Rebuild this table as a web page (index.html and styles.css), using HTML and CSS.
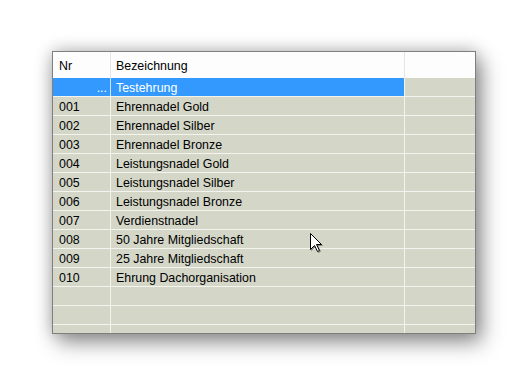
FILE: index.html
```html
<!DOCTYPE html>
<html lang="de">
<head>
<meta charset="utf-8">
<link rel="stylesheet" href="styles.css">
</head>
<body>
<div class="stage">
  <div class="grid">
    <div class="row head">
      <div class="c nr">Nr</div>
      <div class="c bez">Bezeichnung</div>
      <div class="c rest"></div>
    </div>
    <div class="row sel">
      <div class="c nr dots">...</div>
      <div class="c bez">Testehrung</div>
      <div class="c rest"></div>
    </div>
    <div class="row"><div class="c nr">001</div><div class="c bez">Ehrennadel Gold</div><div class="c rest"></div></div>
    <div class="row"><div class="c nr">002</div><div class="c bez">Ehrennadel Silber</div><div class="c rest"></div></div>
    <div class="row"><div class="c nr">003</div><div class="c bez">Ehrennadel Bronze</div><div class="c rest"></div></div>
    <div class="row"><div class="c nr">004</div><div class="c bez">Leistungsnadel Gold</div><div class="c rest"></div></div>
    <div class="row"><div class="c nr">005</div><div class="c bez">Leistungsnadel Silber</div><div class="c rest"></div></div>
    <div class="row"><div class="c nr">006</div><div class="c bez">Leistungsnadel Bronze</div><div class="c rest"></div></div>
    <div class="row"><div class="c nr">007</div><div class="c bez">Verdienstnadel</div><div class="c rest"></div></div>
    <div class="row"><div class="c nr">008</div><div class="c bez">50 Jahre Mitgliedschaft</div><div class="c rest"></div></div>
    <div class="row"><div class="c nr">009</div><div class="c bez">25 Jahre Mitgliedschaft</div><div class="c rest"></div></div>
    <div class="row"><div class="c nr">010</div><div class="c bez">Ehrung Dachorganisation</div><div class="c rest"></div></div>
    <div class="row"><div class="c nr"></div><div class="c bez"></div><div class="c rest"></div></div>
    <div class="row"><div class="c nr"></div><div class="c bez"></div><div class="c rest"></div></div>
    <div class="row"><div class="c nr"></div><div class="c bez"></div><div class="c rest"></div></div>
  </div>
  <svg class="cursor" width="14" height="21" viewBox="0 0 14 21">
    <path d="M0.5 0.5 L0.5 16.5 L4.5 12.5 L7.5 18.5 L9.5 17.5 L6.5 11.5 L11.5 11.5 Z" fill="#fff" stroke="#000" stroke-width="1" stroke-linejoin="miter"/>
  </svg>
</div>
</body>
</html>
```
FILE: styles.css
```css
html, body {
  margin: 0;
  padding: 0;
  background: #fff;
}
.stage {
  position: relative;
  width: 529px;
  height: 387px;
  padding: 51px 0 0 52px;
  box-sizing: border-box;
  font-family: "Liberation Sans", Arial, sans-serif;
  font-size: 12.4px;
  color: #000;
}
.grid {
  width: 424px;
  height: 283px;
  box-sizing: border-box;
  border: 1px solid #7f7f7f;
  background: #d4d7c8;
  overflow: hidden;
  display: flex;
  flex-direction: column;
  box-shadow: 0 0 16px rgba(0,0,0,0.25), 6px 9px 20px rgba(0,0,0,0.38);
}
.row {
  display: flex;
  flex: none;
  height: 19px;
  box-sizing: border-box;
  border-bottom: 1px solid #f4f4ee;
}
.c {
  box-sizing: border-box;
  padding-left: 6px;
  padding-top: 1px;
  line-height: 18px;
  white-space: nowrap;
  overflow: hidden;
}
.nr {
  width: 58px;
  border-right: 1px solid #f4f4ee;
}
.bez {
  width: 294px;
  padding-left: 5px;
  border-right: 1px solid #f4f4ee;
}
.rest {
  flex: 1;
}
.head {
  height: 26px;
  background: #fdfdfd;
  border-bottom: none;
}
.head .c {
  line-height: 26px;
}
.head .nr, .head .bez {
  border-right-color: #e6e6ea;
}
.sel .nr, .sel .bez {
  background: #3399ff;
  color: #fff;
}
.sel .nr {
  border-right-color: #cfe3f7;
}
.dots {
  text-align: right;
  padding-right: 3px;
}
.cursor {
  position: absolute;
  left: 310px;
  top: 233px;
  filter: drop-shadow(1px 1px 0.5px rgba(0,0,0,0.35));
}
```
